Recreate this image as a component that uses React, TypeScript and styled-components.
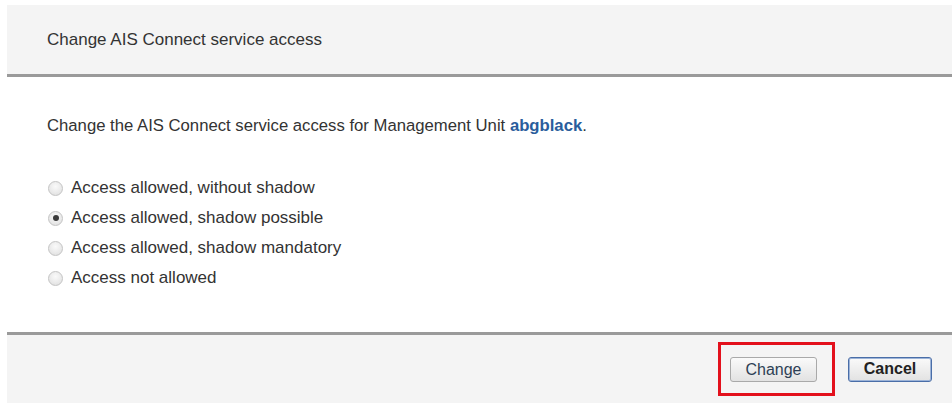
import React, { useState } from 'react';
import styled, { createGlobalStyle } from 'styled-components';

const GlobalStyle = createGlobalStyle`
  html, body {
    margin: 0;
    padding: 0;
    background: #ffffff;
  }
  body {
    font-family: "Liberation Sans", Arial, sans-serif;
    font-size: 17px;
    color: #333333;
  }
`;

type Option = { id: string; label: string };

const OPTIONS: Option[] = [
  { id: 'noShadow', label: 'Access allowed, without shadow' },
  { id: 'shadowPossible', label: 'Access allowed, shadow possible' },
  { id: 'shadowMandatory', label: 'Access allowed, shadow mandatory' },
  { id: 'notAllowed', label: 'Access not allowed' }
];

const Page = styled.div`
  width: 952px;
  height: 405px;
  padding: 5px 0 2px 7px;
  box-sizing: border-box;
  display: flex;
  flex-direction: column;
`;

const Header = styled.div`
  height: 72px;
  background: #f4f4f4;
  display: flex;
  align-items: center;
  padding-left: 40px;
  padding-bottom: 0;
  box-sizing: border-box;
  border-bottom: 3px solid #9a9a9a;
  color: #333;
`;

const Body = styled.div`
  flex: 1;
  background: #ffffff;
  padding: 39px 0 0 40px;
  display: flex;
  flex-direction: column;
`;

const Intro = styled.p`
  margin: 0 0 42px;
  line-height: 20px;
  font-size: 16.7px;
`;

const UnitLink = styled.a`
  color: #2a5d9c;
  font-weight: bold;
  text-decoration: none;
`;

const RadioList = styled.div`
  display: flex;
  flex-direction: column;
  gap: 10px;
`;

const RadioRow = styled.label`
  display: flex;
  align-items: center;
  gap: 8px;
  height: 20px;
  cursor: pointer;
`;

const RadioDot = styled.span<{ $checked: boolean }>`
  width: 15px;
  height: 15px;
  border-radius: 50%;
  box-sizing: border-box;
  margin-left: 1px;
  border: 1px solid #c4c4c4;
  background: radial-gradient(circle at 50% 35%, #fafafa 0%, #e6e6e6 70%, #d4d4d4 100%);
  display: flex;
  align-items: center;
  justify-content: center;

  &::after {
    content: '';
    display: ${p => (p.$checked ? 'block' : 'none')};
    width: 6px;
    height: 6px;
    border-radius: 50%;
    background: #3a3a3a;
  }
`;

const Footer = styled.div`
  height: 71px;
  background: #f4f4f4;
  border-top: 3px solid #9a9a9a;
  box-sizing: border-box;
  display: flex;
  justify-content: flex-end;
  align-items: center;
  padding-right: 20px;
  gap: 13px;
`;

const Highlight = styled.div`
  border: 3px solid #e3101c;
  padding: 12px 15px 11px 9px;
  display: flex;
`;

const Button = styled.button<{ $primary?: boolean }>`
  height: 25px;
  font-family: "Liberation Sans", Arial, sans-serif;
  font-size: 16px;
  color: #222;
  border-radius: 3px;
  border: 1px solid ${p => (p.$primary ? '#4a6ea8' : '#a9a9a9')};
  box-shadow: ${p => (p.$primary ? 'inset 0 0 0 1px #9db4d8' : 'none')};
  background: linear-gradient(#fafafa, #e2e2e2);
  padding: 0;
  font-weight: ${p => (p.$primary ? 'bold' : 'normal')};
  cursor: pointer;
`;

const ChangeButton = styled(Button)`
  width: 87px;
  color: #2d3f55;
`;

const CancelButton = styled(Button)`
  width: 84px;
`;

export default function App(): React.ReactElement {
  const [access, setAccess] = useState('shadowPossible');

  return (
    <>
      <GlobalStyle />
      <Page>
        <Header>Change AIS Connect service access</Header>
        <Body>
          <Intro>
            Change the AIS Connect service access for Management Unit{' '}
            <UnitLink href="#">abgblack</UnitLink>.
          </Intro>
          <RadioList>
            {OPTIONS.map(o => (
              <RadioRow key={o.id} onClick={() => setAccess(o.id)}>
                <RadioDot $checked={access === o.id} />
                {o.label}
              </RadioRow>
            ))}
          </RadioList>
        </Body>
        <Footer>
          <Highlight>
            <ChangeButton>Change</ChangeButton>
          </Highlight>
          <CancelButton $primary>Cancel</CancelButton>
        </Footer>
      </Page>
    </>
  );
}
